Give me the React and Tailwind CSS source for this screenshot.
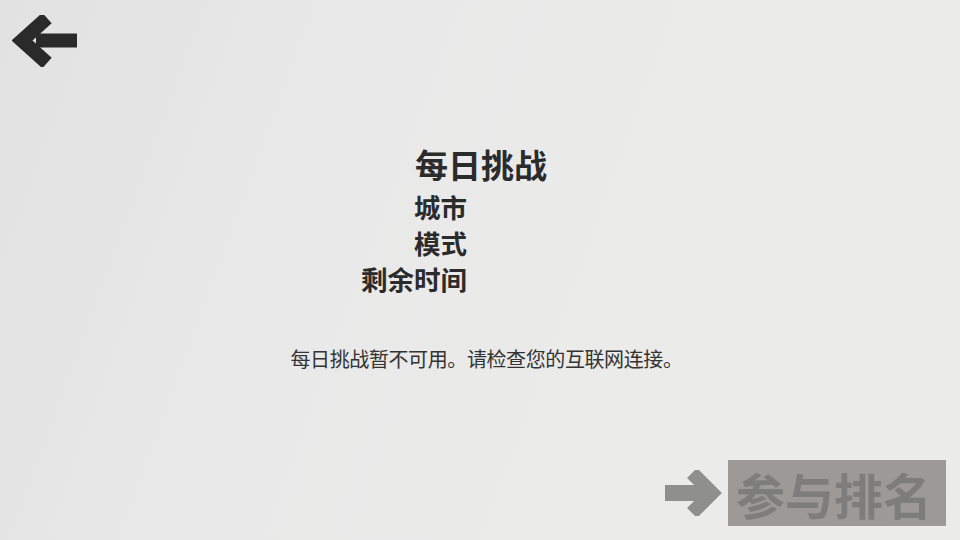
import React from "react";

const BackArrow = () => (
  <svg width="66" height="52" viewBox="0 0 66 52" aria-hidden="true">
    <polyline
      points="35,3 10,25.5 35,48"
      fill="none"
      stroke="#2a2a2a"
      strokeWidth="14"
      strokeLinejoin="miter"
      strokeMiterlimit="4"
    />
    <rect x="24" y="18.5" width="41" height="14" fill="#2a2a2a" />
  </svg>
);

const NextArrow = () => (
  <svg width="57" height="46" viewBox="0 0 57 46" aria-hidden="true">
    <rect x="0" y="15" width="40" height="16" fill="#8f8f8d" />
    <polyline
      points="27,3 47,23 27,43"
      fill="none"
      stroke="#8f8f8d"
      strokeWidth="14"
      strokeLinejoin="miter"
      strokeMiterlimit="4"
    />
  </svg>
);

export default function App() {
  return (
    <div
      className="w-[960px] h-[540px] overflow-hidden flex flex-col bg-[linear-gradient(110deg,#e2e2e2_0%,#e9e9e9_35%,#ebebea_65%,#ecedea_100%)] text-[#2b2b2b]"
      style={{ fontFamily: '"Noto Sans CJK SC", "Noto Sans", sans-serif' }}
    >
      {/* back button */}
      <div className="h-[80px] pl-[12px] pt-[15px]">
        <button className="block">
          <BackArrow />
        </button>
      </div>

      {/* challenge info */}
      <div className="mt-[68px] pl-[415px] text-[33px] leading-[33px] font-bold">
        每日挑战
      </div>
      <div className="mt-[8px] w-[467px] text-right text-[26.5px] leading-[36px] font-bold">
        <div>城市</div>
        <div>模式</div>
        <div>剩余时间</div>
      </div>

      <p className="mt-[52px] pl-[13px] text-center text-[20px] leading-[20px] tracking-[-0.4px] text-[#333333]">
        每日挑战暂不可用。请检查您的互联网连接。
      </p>

      {/* rank button */}
      <div className="mt-auto flex justify-end items-center gap-[6px] pr-[14px] pb-[14px]">
        <NextArrow />
        <button className="w-[218px] h-[66px] bg-[#9b9a97] flex items-center justify-center pr-[6px] text-[49px] leading-none font-bold text-[#7d7d7b]">
          参与排名
        </button>
      </div>
    </div>
  );
}
